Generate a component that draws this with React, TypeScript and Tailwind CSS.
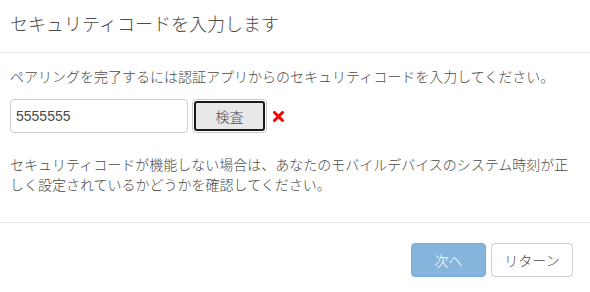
export default function App() {
  const font = { fontFamily: '"Noto Sans CJK JP", "Liberation Sans", sans-serif' };
  return (
    <div className="w-[590px] h-[292px] bg-white text-[#4a4a4a] font-light overflow-hidden" style={font}>
      {/* Header */}
      <div className="h-[53px] border-b border-[#e5e5e5] px-[10px] flex items-center">
        <h4 className="text-[18px] leading-[26px] text-[#4a4a4a] font-light -mt-[6px]">
          セキュリティコードを入力します
        </h4>
      </div>

      {/* Body */}
      <div className="h-[170px] border-b border-[#e5e5e5] px-[10px] pt-[13px]">
        <p className="text-[14px] leading-[20px]">
          ペアリングを完了するには認証アプリからのセキュリティコードを入力してください。
        </p>
        <div className="flex items-center mt-[13px]">
          <input
            defaultValue="5555555"
            className="w-[178px] h-[34px] border border-[#cccccc] rounded-[4px] px-[5px] text-[14px] text-[#4a4a4a] outline-none"
            style={{ fontFamily: '"Liberation Sans", Arial, sans-serif' }}
          />
          <button className="ml-[4px] w-[75px] h-[34px] rounded-[4px] border border-[#cccccc] p-[1px] bg-white">
            <span className="flex h-full w-full items-center justify-center rounded-[3px] border-2 border-[#1a1a1a] bg-[#e8e8e8] text-[14px] text-[#4a4a4a] font-light">
              検査
            </span>
          </button>
          <svg className="ml-[6px]" width="11" height="11" viewBox="0 0 11 11">
            <path d="M1.5 1.5 L9.5 9.5 M9.5 1.5 L1.5 9.5" stroke="#ff0000" strokeWidth="3" strokeLinecap="round" />
          </svg>
        </div>
        <p className="text-[14px] leading-[20px] mt-[21px] pr-[10px]">
          セキュリティコードが機能しない場合は、あなたのモバイルデバイスのシステム時刻が正しく設定されているかどうかを確認してください。
        </p>
      </div>

      {/* Footer */}
      <div className="flex justify-end gap-[5px] pr-[17px] pt-[20px]">
        <button className="w-[75px] h-[34px] rounded-[4px] bg-[#85b4dd] border border-[#7aaad6] text-white text-[14px] font-light">
          次へ
        </button>
        <button className="w-[82px] h-[34px] rounded-[4px] bg-white border border-[#cccccc] text-[#4a4a4a] text-[14px] font-light">
          リターン
        </button>
      </div>
    </div>
  );
}
